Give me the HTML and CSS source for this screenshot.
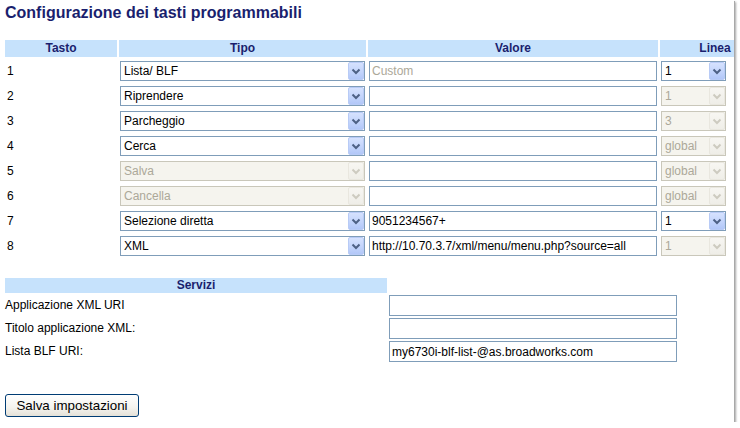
FILE: index.html
```html
<!DOCTYPE html>
<html lang="it">
<head>
<meta charset="utf-8">
<title>Configurazione dei tasti programmabili</title>
<link rel="stylesheet" href="styles.css">
</head>
<body>
<div class="frame">
  <h1 class="title">Configurazione dei tasti programmabili</h1>

  <div class="keys">
    <div class="hd">Tasto</div>
    <div class="hd">Tipo</div>
    <div class="hd">Valore</div>
    <div class="hd">Linea</div>

    <div class="num">1</div>
    <div class="cell"><div class="sel type"><span class="sel-text">Lista/ BLF</span><span class="sel-btn"><svg width="16" height="18" viewBox="0 0 16 18"><path d="M4.5 7.5 L8 11 L11.5 7.5" fill="none" stroke-width="2"/></svg></span></div></div>
    <div class="cell"><input class="txt val" type="text" placeholder="Custom"></div>
    <div class="cell"><div class="sel line"><span class="sel-text">1</span><span class="sel-btn"><svg width="16" height="18" viewBox="0 0 16 18"><path d="M4.5 7.5 L8 11 L11.5 7.5" fill="none" stroke-width="2"/></svg></span></div></div>

    <div class="num">2</div>
    <div class="cell"><div class="sel type"><span class="sel-text">Riprendere</span><span class="sel-btn"><svg width="16" height="18" viewBox="0 0 16 18"><path d="M4.5 7.5 L8 11 L11.5 7.5" fill="none" stroke-width="2"/></svg></span></div></div>
    <div class="cell"><input class="txt val" type="text"></div>
    <div class="cell"><div class="sel line off"><span class="sel-text">1</span><span class="sel-btn"><svg width="16" height="18" viewBox="0 0 16 18"><path d="M4.5 7.5 L8 11 L11.5 7.5" fill="none" stroke-width="2"/></svg></span></div></div>

    <div class="num">3</div>
    <div class="cell"><div class="sel type"><span class="sel-text">Parcheggio</span><span class="sel-btn"><svg width="16" height="18" viewBox="0 0 16 18"><path d="M4.5 7.5 L8 11 L11.5 7.5" fill="none" stroke-width="2"/></svg></span></div></div>
    <div class="cell"><input class="txt val" type="text"></div>
    <div class="cell"><div class="sel line off"><span class="sel-text">3</span><span class="sel-btn"><svg width="16" height="18" viewBox="0 0 16 18"><path d="M4.5 7.5 L8 11 L11.5 7.5" fill="none" stroke-width="2"/></svg></span></div></div>

    <div class="num">4</div>
    <div class="cell"><div class="sel type"><span class="sel-text">Cerca</span><span class="sel-btn"><svg width="16" height="18" viewBox="0 0 16 18"><path d="M4.5 7.5 L8 11 L11.5 7.5" fill="none" stroke-width="2"/></svg></span></div></div>
    <div class="cell"><input class="txt val" type="text"></div>
    <div class="cell"><div class="sel line off"><span class="sel-text">global</span><span class="sel-btn"><svg width="16" height="18" viewBox="0 0 16 18"><path d="M4.5 7.5 L8 11 L11.5 7.5" fill="none" stroke-width="2"/></svg></span></div></div>

    <div class="num">5</div>
    <div class="cell"><div class="sel type off"><span class="sel-text">Salva</span><span class="sel-btn"><svg width="16" height="18" viewBox="0 0 16 18"><path d="M4.5 7.5 L8 11 L11.5 7.5" fill="none" stroke-width="2"/></svg></span></div></div>
    <div class="cell"><input class="txt val" type="text"></div>
    <div class="cell"><div class="sel line off"><span class="sel-text">global</span><span class="sel-btn"><svg width="16" height="18" viewBox="0 0 16 18"><path d="M4.5 7.5 L8 11 L11.5 7.5" fill="none" stroke-width="2"/></svg></span></div></div>

    <div class="num">6</div>
    <div class="cell"><div class="sel type off"><span class="sel-text">Cancella</span><span class="sel-btn"><svg width="16" height="18" viewBox="0 0 16 18"><path d="M4.5 7.5 L8 11 L11.5 7.5" fill="none" stroke-width="2"/></svg></span></div></div>
    <div class="cell"><input class="txt val" type="text"></div>
    <div class="cell"><div class="sel line off"><span class="sel-text">global</span><span class="sel-btn"><svg width="16" height="18" viewBox="0 0 16 18"><path d="M4.5 7.5 L8 11 L11.5 7.5" fill="none" stroke-width="2"/></svg></span></div></div>

    <div class="num">7</div>
    <div class="cell"><div class="sel type"><span class="sel-text">Selezione diretta</span><span class="sel-btn"><svg width="16" height="18" viewBox="0 0 16 18"><path d="M4.5 7.5 L8 11 L11.5 7.5" fill="none" stroke-width="2"/></svg></span></div></div>
    <div class="cell"><input class="txt val" type="text" value="9051234567+"></div>
    <div class="cell"><div class="sel line"><span class="sel-text">1</span><span class="sel-btn"><svg width="16" height="18" viewBox="0 0 16 18"><path d="M4.5 7.5 L8 11 L11.5 7.5" fill="none" stroke-width="2"/></svg></span></div></div>

    <div class="num">8</div>
    <div class="cell"><div class="sel type"><span class="sel-text">XML</span><span class="sel-btn"><svg width="16" height="18" viewBox="0 0 16 18"><path d="M4.5 7.5 L8 11 L11.5 7.5" fill="none" stroke-width="2"/></svg></span></div></div>
    <div class="cell"><input class="txt val" type="text" value="http://10.70.3.7/xml/menu/menu.php?source=all"></div>
    <div class="cell"><div class="sel line off"><span class="sel-text">1</span><span class="sel-btn"><svg width="16" height="18" viewBox="0 0 16 18"><path d="M4.5 7.5 L8 11 L11.5 7.5" fill="none" stroke-width="2"/></svg></span></div></div>
  </div>

  <div class="services">
    <div class="hd shd">Servizi</div>
    <div></div>
    <div class="lbl">Applicazione XML URI</div>
    <div><input class="txt svc" type="text"></div>
    <div class="lbl">Titolo applicazione XML:</div>
    <div><input class="txt svc" type="text"></div>
    <div class="lbl">Lista BLF URI:</div>
    <div><input class="txt svc" type="text" value="my6730i-blf-list-@as.broadworks.com"></div>
  </div>

  <button class="save" type="button">Salva impostazioni</button>
</div>
</body>
</html>
```

FILE: styles.css
```css
html, body {
  margin: 0;
  padding: 0;
  background: #ffffff;
}

body {
  font-family: "Liberation Sans", Arial, sans-serif;
  font-size: 12px;
  color: #000000;
}

.frame {
  width: 734px;
  height: 422px;
  overflow: hidden;
  background: #ffffff;
  box-shadow: 1px 1px 0 #a8a8a8, 2px 2px 2px rgba(0, 0, 0, 0.35);
  box-sizing: border-box;
}

.title {
  margin: 0;
  padding: 3px 0 0 5px;
  height: 21px;
  font-size: 16px;
  font-weight: bold;
  line-height: 19px;
  color: #1a1f6e;
}

.keys {
  display: grid;
  grid-template-columns: 112px 247px 290px 110px;
  grid-template-rows: 17px repeat(8, 23px);
  column-gap: 2px;
  row-gap: 2px;
  margin: 16px 0 0 5px;
  width: 770px;
}

.hd {
  background: #c6e2fc;
  color: #1a1f6e;
  font-weight: bold;
  font-size: 12px;
  line-height: 17px;
  text-align: center;
}

.num {
  padding: 2px 0 0 2px;
  line-height: 20px;
}

.cell {
  padding-top: 2px;
}

.sel {
  display: flex;
  align-items: stretch;
  height: 20px;
  box-sizing: border-box;
  border: 1px solid #7f9db9;
  background: #ffffff;
  color: #000000;
}

.sel.type {
  width: 245px;
  margin-left: 1px;
}

.sel.line {
  width: 65px;
  margin-left: 1px;
}

.sel-text {
  flex: 1;
  padding-left: 3px;
  line-height: 18px;
  white-space: nowrap;
  overflow: hidden;
}

.sel-btn {
  width: 16px;
  height: 18px;
  box-sizing: border-box;
  border: 1px solid #b8cbf6;
  border-radius: 2px;
  background: linear-gradient(#d6e2fe, #c1d3fb 60%, #b2c7f8);
  display: flex;
}

.sel-btn svg {
  margin: -1px;
}

.sel-btn path {
  stroke: #4d6185;
}

.sel.off {
  border-color: #c9c7ba;
  background: #f5f4ee;
  color: #aca899;
}

.sel.off .sel-btn {
  border-color: #e9e7df;
  background: linear-gradient(#f7f6f2, #efeee8);
}

.sel.off .sel-btn path {
  stroke: #cdcbc0;
}

.txt {
  display: block;
  box-sizing: border-box;
  height: 20px;
  margin: 0;
  padding: 0 2px;
  border: 1px solid #7f9db9;
  background: #ffffff;
  font-family: "Liberation Sans", Arial, sans-serif;
  font-size: 12px;
  color: #000000;
  outline: none;
}

.txt::placeholder {
  color: #aca899;
  opacity: 1;
}

.txt.val {
  width: 288px;
  margin-left: 1px;
}

.services {
  display: grid;
  grid-template-columns: 382px 290px;
  grid-template-rows: 15px repeat(3, 21px);
  column-gap: 2px;
  row-gap: 2px;
  margin: 21px 0 0 5px;
}

.hd.shd {
  line-height: 15px;
}

.lbl {
  line-height: 21px;
}

.txt.svc {
  width: 288px;
  height: 21px;
}

.save {
  display: block;
  margin: 32px 0 0 5px;
  width: 134px;
  height: 23px;
  padding: 0;
  border: 1px solid #003c74;
  border-radius: 3px;
  background: linear-gradient(#ffffff, #f4f3ee 60%, #e4e1d8);
  font-family: "Liberation Sans", Arial, sans-serif;
  font-size: 13.33px;
  color: #000000;
}
```
